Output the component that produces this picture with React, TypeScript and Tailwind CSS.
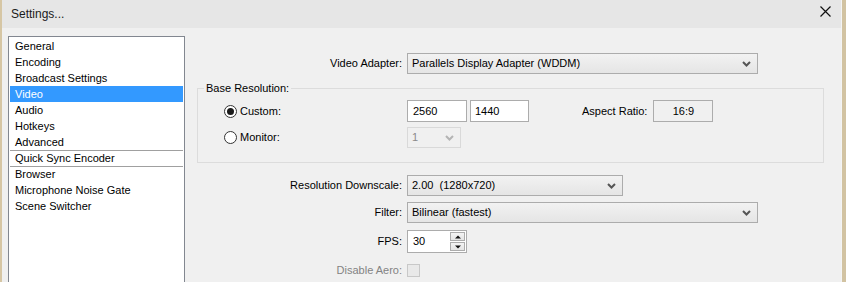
import React from "react";

const font = { fontFamily: '"Liberation Sans", Arial, sans-serif' };

const menu = [
  { label: "General" },
  { label: "Encoding" },
  { label: "Broadcast Settings" },
  { label: "Video", active: true },
  { label: "Audio" },
  { label: "Hotkeys" },
  { label: "Advanced" },
  { label: "Quick Sync Encoder", sep: true },
  { label: "Browser", sep: true },
  { label: "Microphone Noise Gate" },
  { label: "Scene Switcher" },
];

function Chevron({ disabled }: { disabled?: boolean }) {
  return (
    <svg width="9" height="6" viewBox="0 0 9 6" className="shrink-0">
      <path
        d="M1 1 L4.5 4.5 L8 1"
        fill="none"
        stroke={disabled ? "#b4b4b4" : "#555"}
        strokeWidth="2"
      />
    </svg>
  );
}

function Select({ value, className }: { value: string; className: string }) {
  return (
    <div
      className={`flex h-[21px] items-center justify-between border border-[#acacac] bg-gradient-to-b from-[#f2f2f2] to-[#e5e5e5] pl-[4px] pr-[6px] text-[11px] text-black ${className}`}
    >
      <span className="whitespace-pre">{value}</span>
      <Chevron />
    </div>
  );
}

function Radio({ checked }: { checked?: boolean }) {
  return (
    <div className="flex h-[13px] w-[13px] items-center justify-center rounded-full border border-[#333] bg-white">
      {checked && <div className="h-[7px] w-[7px] rounded-full bg-[#1a1a1a]" />}
    </div>
  );
}

function Label({ text, dim }: { text: string; dim?: boolean }) {
  return (
    <span
      className={`w-[210px] pr-[5px] text-right text-[11px] ${dim ? "text-[#838383]" : "text-black"}`}
    >
      {text}
    </span>
  );
}

export default function App() {
  return (
    <div
      style={font}
      className="flex h-[282px] w-[846px] flex-col overflow-hidden border-l-2 border-r-4 border-l-[#d6c6a4] border-r-[#d2c3a2] bg-[#f0f0f0]"
    >
      <div className="flex h-[28px] shrink-0 items-center justify-between border-r border-r-[#f4f4f4] bg-[#e6e6e6] pl-[9px] pr-[10px]">
        <span className="text-[12px] text-[#1a1a1a]">Settings...</span>
        <svg width="11" height="11" viewBox="0 0 11 11" className="mb-[5px]">
          <path d="M0.5 0.5 L10.5 10.5 M10.5 0.5 L0.5 10.5" stroke="#111" strokeWidth="1.2" />
        </svg>
      </div>

      <div className="flex flex-1 border-r border-r-[#f4f4f4] pl-[6px] pt-[8px]">
        <div className="h-[260px] w-[177px] shrink-0 border border-[#828790] bg-white p-[1px]">
          {menu.map((m) => (
            <div
              key={m.label}
              className={`flex h-[16px] items-center pl-[5px] text-[11px] ${
                m.sep ? "border-t border-t-[#a0a0a0]" : ""
              } ${m.active ? "bg-[#3399ff] text-white" : "text-black"}`}
            >
              {m.label}
            </div>
          ))}
        </div>

        <div className="ml-[12px] flex w-[627px] flex-col pt-[17px]">
          <div className="flex items-center">
            <Label text="Video Adapter:" />
            <Select value="Parallels Display Adapter (WDDM)" className="w-[351px]" />
          </div>

          <fieldset className="mt-[8px] border border-[#dcdcdc] pb-[14px]">
            <legend className="ml-[6px] px-[2px] text-[11px] leading-[13px] text-black">
              Base Resolution:
            </legend>
            <div className="mt-[5px] flex h-[22px] items-center">
              <div className="flex w-[209px] items-center gap-[3px] pl-[26px] text-[11px]">
                <Radio checked />
                <span>Custom:</span>
              </div>
              <div className="flex h-[22px] w-[60px] items-center border border-[#acacac] bg-white pl-[5px] text-[11px]">
                2560
              </div>
              <div className="ml-[3px] flex h-[22px] w-[59px] items-center border border-[#acacac] bg-white pl-[4px] text-[11px]">
                1440
              </div>
              <span className="ml-[53px] text-[11px]">Aspect Ratio:</span>
              <div className="ml-[6px] flex h-[22px] w-[60px] items-center justify-center border border-[#acacac] bg-[#f0f0f0] text-[11px]">
                16:9
              </div>
            </div>
            <div className="mt-[5px] flex h-[21px] items-center">
              <div className="flex w-[209px] items-center gap-[3px] pl-[26px] text-[11px]">
                <Radio />
                <span>Monitor:</span>
              </div>
              <div className="flex h-[21px] w-[54px] items-center justify-between border border-[#d9d9d9] bg-[#f0f0f0] pl-[4px] pr-[6px] text-[11px] text-[#8a8a8a]">
                <span>1</span>
                <Chevron disabled />
              </div>
            </div>
          </fieldset>

          <div className="mt-[12px] flex items-center">
            <Label text="Resolution Downscale:" />
            <Select value="2.00  (1280x720)" className="w-[216px]" />
          </div>

          <div className="mt-[6px] flex items-center">
            <Label text="Filter:" />
            <Select value="Bilinear (fastest)" className="w-[351px]" />
          </div>

          <div className="mt-[7px] flex items-center">
            <Label text="FPS:" />
            <div className="flex h-[23px] w-[60px] items-center justify-between border border-[#acacac] bg-white pl-[5px] pr-[1px] text-[11px]">
              <span>30</span>
              <div className="flex flex-col gap-[1px]">
                {["M1 4.5 L4 1.5 L7 4.5 Z", "M1 1.5 L4 4.5 L7 1.5 Z"].map((d) => (
                  <div
                    key={d}
                    className="flex h-[9px] w-[15px] items-center justify-center border border-[#acacac] bg-gradient-to-b from-[#f4f4f4] to-[#e4e4e4]"
                  >
                    <svg width="8" height="6" viewBox="0 0 8 6">
                      <path d={d} fill="#111" />
                    </svg>
                  </div>
                ))}
              </div>
            </div>
          </div>

          <div className="mt-[9px] flex items-center">
            <Label text="Disable Aero:" dim />
            <div className="h-[13px] w-[13px] border border-[#c8c8c8] bg-[#e9e9e9]" />
          </div>
        </div>
      </div>
    </div>
  );
}
